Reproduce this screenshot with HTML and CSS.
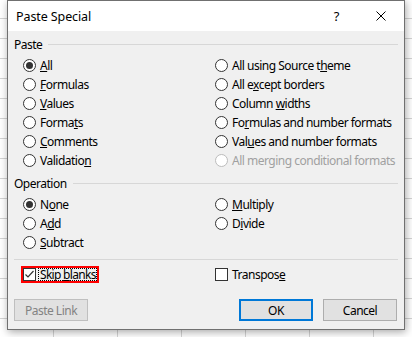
FILE: index.html
```html
<!DOCTYPE html>
<html>
<head>
<meta charset="utf-8">
<link rel="stylesheet" href="styles.css">
</head>
<body>
<div class="dialog">
  <div class="titlebar">
    <span class="title">Paste Special</span>
    <span class="tb-btn tb-help">?</span>
    <span class="tb-btn tb-close"><svg width="10" height="10" viewBox="0 0 10 10"><path d="M0.5 0.5L9.5 9.5M9.5 0.5L0.5 9.5" stroke="#000" stroke-width="1" fill="none"/></svg></span>
  </div>
  <div class="content">
    <div class="group-head"><span class="group-label">Paste</span><i class="rule"></i></div>
    <div class="grid">
      <div class="opt"><span class="radio on"></span><span><u>A</u>ll</span></div>
      <div class="opt"><span class="radio"></span><span>All using Source t<u>h</u>eme</span></div>
      <div class="opt"><span class="radio"></span><span><u>F</u>ormulas</span></div>
      <div class="opt"><span class="radio"></span><span>All e<u>x</u>cept borders</span></div>
      <div class="opt"><span class="radio"></span><span><u>V</u>alues</span></div>
      <div class="opt"><span class="radio"></span><span>Column <u>w</u>idths</span></div>
      <div class="opt"><span class="radio"></span><span>Forma<u>t</u>s</span></div>
      <div class="opt"><span class="radio"></span><span>Fo<u>r</u>mulas and number formats</span></div>
      <div class="opt"><span class="radio"></span><span><u>C</u>omments</span></div>
      <div class="opt"><span class="radio"></span><span>Val<u>u</u>es and number formats</span></div>
      <div class="opt"><span class="radio"></span><span>Validatio<u>n</u></span></div>
      <div class="opt disabled"><span class="radio"></span><span>All merging conditional formats</span></div>
    </div>
    <div class="group-head second"><span class="group-label">Operation</span><i class="rule"></i></div>
    <div class="grid">
      <div class="opt"><span class="radio on"></span><span>N<u>o</u>ne</span></div>
      <div class="opt"><span class="radio"></span><span><u>M</u>ultiply</span></div>
      <div class="opt"><span class="radio"></span><span>A<u>d</u>d</span></div>
      <div class="opt"><span class="radio"></span><span>D<u>i</u>vide</span></div>
      <div class="opt"><span class="radio"></span><span><u>S</u>ubtract</span></div>
    </div>
    <div class="separator"></div>
    <div class="grid checks">
      <div class="opt skip"><span class="checkbox"><svg width="11" height="11" viewBox="0 0 11 11"><path d="M1.5 5.5L4 8L9.5 2" stroke="#333" stroke-width="1.2" fill="none"/></svg></span><span class="focus">Skip <u>b</u>lanks</span></div>
      <div class="opt"><span class="checkbox"></span><span>Transpos<u>e</u></span></div>
    </div>
    <div class="buttons">
      <span class="btn disabled-btn">Paste Link</span>
      <span class="btn default">OK</span>
      <span class="btn">Cancel</span>
    </div>
  </div>
</div>
</body>
</html>
```
FILE: styles.css
```css
* { box-sizing: border-box; margin: 0; padding: 0; }
html, body { width: 412px; height: 337px; overflow: hidden; }
body {
  background-color: #fff;
  background-image:
    linear-gradient(to right, #d4d4d4 1px, transparent 1px),
    linear-gradient(to bottom, #d4d4d4 1px, transparent 1px);
  background-size: 64px 100%, 100% 20px;
  background-position: 53px 0, 0 18px;
  font-family: "Noto Sans", "Liberation Sans", sans-serif;
  font-size: 12px;
  color: #000;
}
.dialog {
  margin-left: 7px;
  width: 398px;
  border: 1px solid #707070;
  background: #f0f0f0;
  box-shadow: 1px 2px 8px rgba(0, 0, 0, 0.35);
  display: flex;
  flex-direction: column;
}
.titlebar {
  height: 30px;
  background: #fff;
  display: flex;
  align-items: center;
  padding-left: 8px;
}
.title { font-size: 12.5px; flex: 1; letter-spacing: -0.1px; }
.tb-btn {
  width: 46px;
  height: 30px;
  display: flex;
  align-items: center;
  justify-content: center;
}
.tb-help { font-size: 13px; padding-left: 3px; }
.content {
  padding: 7px 6px 8px 6px;
  display: flex;
  flex-direction: column;
  letter-spacing: -0.5px;
}
.group-head {
  display: flex;
  align-items: center;
  height: 13px;
  gap: 6px;
}
.group-head.second { margin-top: 7px; }
.group-label { line-height: 13px; }
.rule { flex: 1; height: 1px; background: #d7d7d7; }
.grid {
  display: grid;
  grid-template-columns: 192px 1fr;
  grid-auto-rows: 19px;
  margin: 5px 0 0 9px;
}
.opt {
  display: flex;
  align-items: center;
  gap: 4px;
  white-space: nowrap;
}
.radio {
  width: 13px;
  height: 13px;
  border: 1px solid #333;
  border-radius: 50%;
  background: #fff;
  position: relative;
  flex: none;
}
.radio.on::after {
  content: "";
  position: absolute;
  left: 2px;
  top: 2px;
  width: 7px;
  height: 7px;
  border-radius: 50%;
  background: #333;
}
.disabled { color: #a0a0a0; }
.disabled .radio { border-color: #bcbcbc; }
.separator {
  margin-top: 7px;
  height: 1px;
  background: #d7d7d7;
}
.checkbox {
  width: 13px;
  height: 13px;
  border: 1px solid #333;
  background: #fff;
  flex: none;
  display: flex;
  align-items: center;
  justify-content: center;
}
.skip {
  height: 13px;
  align-self: center;
  justify-self: start;
  gap: 2px;
  outline: 2px solid #ff0000;
}
.focus {
  border: 1px dotted #000;
  padding: 0 0 0 1px;
  line-height: 11px;
  letter-spacing: -0.7px;
}
.buttons {
  margin-top: 15px;
  display: flex;
  gap: 10px;
  padding-right: 1px;
}
.btn {
  width: 74px;
  height: 22px;
  border: 1px solid #adadad;
  background: #e1e1e1;
  display: flex;
  align-items: center;
  justify-content: center;
}
.btn.disabled-btn {
  margin-right: auto;
  color: #838383;
  border-color: #bfbfbf;
}
.btn.default { border: 2px solid #0078d7; }
```
